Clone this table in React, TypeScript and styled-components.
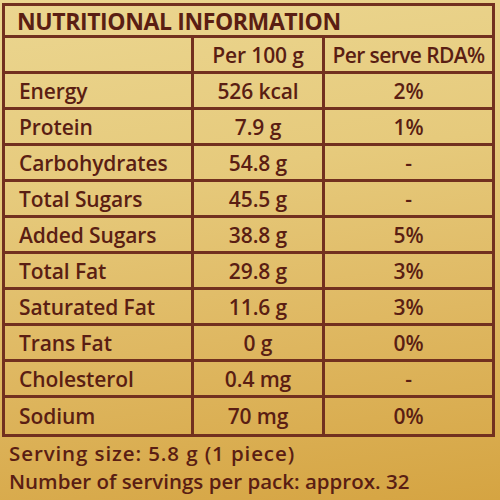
import React from "react";
import styled, { createGlobalStyle } from "styled-components";

const Global = createGlobalStyle`
  html, body { margin: 0; padding: 0; }
  body {
    width: 500px;
    height: 500px;
    overflow: hidden;
    font-family: "Open Sans", "Liberation Sans", sans-serif;
  }
`;

const LINE = "#72301f";
const INK = "#5a1e13";

const Page = styled.div`
  width: 500px;
  height: 500px;
  box-sizing: border-box;
  padding: 3px 0 0 2px;
  background: linear-gradient(172deg, #ebd690 0%, #e6ca7c 35%, #dfb862 65%, #d5a442 100%);
  color: ${INK};
`;

const Table = styled.div`
  width: 493px;
  box-sizing: border-box;
  border: 3px solid ${LINE};
`;

const Title = styled.div`
  height: 29px;
  border-bottom: 3px solid ${LINE};
  display: flex;
  align-items: center;
  padding-left: 12px;
  font-weight: 700;
  font-size: 23px;
  letter-spacing: -0.4px;
`;

const Row = styled.div<{ $last?: boolean }>`
  display: grid;
  grid-template-columns: 186px 131px 1fr;
  height: 36px;
  box-sizing: border-box;
  border-bottom: ${(p) => (p.$last ? "none" : `3px solid ${LINE}`)};
`;

const Cell = styled.div<{ $align?: "left" | "center"; $tight?: boolean }>`
  display: flex;
  align-items: center;
  justify-content: ${(p) => (p.$align === "left" ? "flex-start" : "center")};
  padding-left: ${(p) => (p.$align === "left" ? "14px" : "0")};
  font-size: 21px;
  font-weight: 600;
  letter-spacing: ${(p) => (p.$tight ? "-0.6px" : "-0.1px")};
  white-space: nowrap;
  & + & {
    border-left: 3px solid ${LINE};
  }
`;

const Footer = styled.div`
  padding: 2px 0 0 7px;
  font-size: 20.5px;
  font-weight: 600;
  line-height: 28px;
`;

const FooterLine = styled.div<{ $spacing?: number }>`
  letter-spacing: ${(p) => p.$spacing ?? 0}px;
`;

const rows: [string, string, string][] = [
  ["Energy", "526 kcal", "2%"],
  ["Protein", "7.9 g", "1%"],
  ["Carbohydrates", "54.8 g", "-"],
  ["Total Sugars", "45.5 g", "-"],
  ["Added Sugars", "38.8 g", "5%"],
  ["Total Fat", "29.8 g", "3%"],
  ["Saturated Fat", "11.6 g", "3%"],
  ["Trans Fat", "0 g", "0%"],
  ["Cholesterol", "0.4 mg", "-"],
  ["Sodium", "70 mg", "0%"],
];

export default function App() {
  return (
    <Page>
      <Global />
      <Table>
        <Title>NUTRITIONAL INFORMATION</Title>
        <Row>
          <Cell $align="left" />
          <Cell>Per 100 g</Cell>
          <Cell $tight>Per serve RDA%</Cell>
        </Row>
        {rows.map(([n, v, r], i) => (
          <Row key={n} $last={i === rows.length - 1}>
            <Cell $align="left">{n}</Cell>
            <Cell>{v}</Cell>
            <Cell>{r}</Cell>
          </Row>
        ))}
      </Table>
      <Footer>
        <FooterLine $spacing={0.9}>Serving size: 5.8 g (1 piece)</FooterLine>
        <FooterLine>Number of servings per pack: approx. 32</FooterLine>
      </Footer>
    </Page>
  );
}
